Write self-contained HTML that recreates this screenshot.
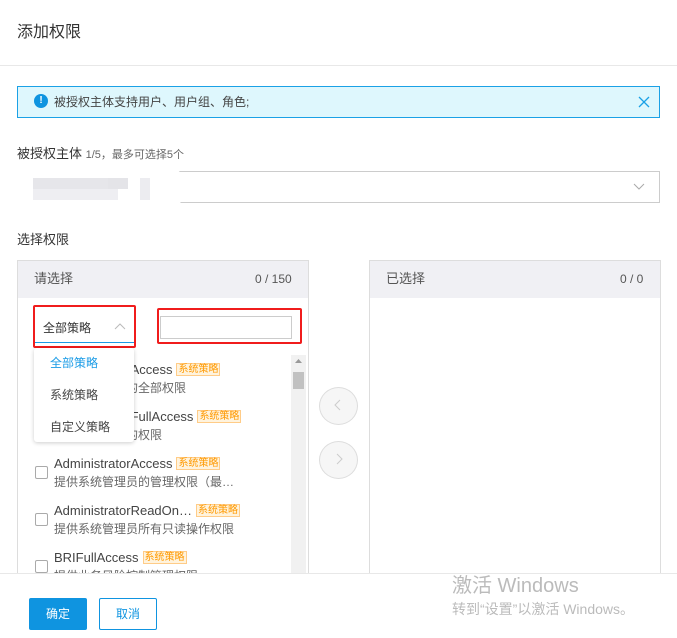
<!DOCTYPE html>
<html><head><meta charset="utf-8"><style>
*{margin:0;padding:0;box-sizing:border-box}
body{width:677px;height:638px;position:relative;background:#fff;font-family:"Liberation Sans","Noto Sans CJK SC",sans-serif;color:#333;overflow:hidden;font-size:12px}
.a{position:absolute;white-space:nowrap;line-height:16px}
.tag{font-size:10px;color:#f90;background:#fff3dd;border:1px solid #fc8;padding:0 1px;line-height:12px;margin-left:4px;vertical-align:2px}
.nm{font-size:13px;color:#444}
.ds{font-size:12px;color:#666}
.cb{position:absolute;width:13px;height:13px;border:1px solid #aaa;border-radius:2px;background:#fff}
</style></head><body>
<div class="a" style="left:17px;top:24px;font-size:16px;line-height:18px;color:#333">添加权限</div>
<div class="a" style="left:0;top:65px;width:677px;height:1px;background:#e8e8e8"></div>
<div class="a" style="left:17px;top:86px;width:643px;height:32px;background:#def7fd;border:1px solid #1ba1e6"></div>
<div class="a" style="left:34px;top:94px;width:14px;height:14px;border-radius:50%;background:#0f94e0;color:#fff;font-size:10px;font-weight:bold;text-align:center;line-height:14px">!</div>
<div class="a" style="left:54px;top:94px;font-size:12px;color:#444">被授权主体支持用户、用户组、角色;</div>
<svg class="a" style="left:638px;top:96px" width="12" height="12"><path d="M1 1L11 11M11 1L1 11" stroke="#1ba1e6" stroke-width="1.3"/></svg>
<div class="a" style="left:17px;top:146px;font-size:13px;color:#333">被授权主体 <span style="font-size:11px;color:#666">1/5，最多可选择5个</span></div>
<div class="a" style="left:17px;top:171px;width:643px;height:32px;border:1px solid #ccc"></div>
<div class="a" style="left:8px;top:163px;width:175px;height:50px;background:#fff;border-radius:20px"></div>
<div class="a" style="left:33px;top:178px;width:85px;height:11px;background:#e6e6ea"></div>
<div class="a" style="left:33px;top:189px;width:85px;height:11px;background:#eeeef2"></div>
<div class="a" style="left:108px;top:178px;width:20px;height:11px;background:#e4e4e8"></div>
<div class="a" style="left:140px;top:178px;width:10px;height:22px;background:#ececf0"></div>
<svg class="a" style="left:633px;top:183px" width="12" height="8"><path d="M1 1L6 6L11 1" stroke="#aaa" fill="none"/></svg>
<div class="a" style="left:17px;top:232px;font-size:13px;color:#333">选择权限</div>

<div class="a" style="left:17px;top:260px;width:292px;height:330px;border:1px solid #ddd"></div>
<div class="a" style="left:18px;top:261px;width:290px;height:37px;background:#f0f0f4"></div>
<div class="a" style="left:34px;top:271px;font-size:13px;color:#555">请选择</div>
<div class="a" style="left:255px;top:271px;font-size:12px;color:#555">0 / 150</div>
<div class="a" style="left:369px;top:260px;width:292px;height:330px;border:1px solid #ddd"></div>
<div class="a" style="left:370px;top:261px;width:290px;height:37px;background:#f0f0f4"></div>
<div class="a" style="left:386px;top:271px;font-size:13px;color:#555">已选择</div>
<div class="a" style="left:620px;top:271px;font-size:12px;color:#555">0 / 0</div>

<div class="a" style="left:319px;top:387px;width:39px;height:38px;border-radius:50%;border:1px solid #ddd;background:#f6f6f6"></div>
<svg class="a" style="left:334px;top:399px" width="8" height="12"><path d="M6 1L1 6L6 11" stroke="#ccc" fill="none"/></svg>
<div class="a" style="left:319px;top:441px;width:39px;height:38px;border-radius:50%;border:1px solid #ddd;background:#f6f6f6"></div>
<svg class="a" style="left:336px;top:453px" width="8" height="12"><path d="M1 1L6 6L1 11" stroke="#ccc" fill="none"/></svg>

<div class="a" style="left:291px;top:355px;width:15px;height:218px;background:#f1f1f1"></div>
<div class="a" style="left:293px;top:372px;width:11px;height:17px;background:#c1c1c1"></div>
<svg class="a" style="left:295px;top:359px" width="7" height="5"><path d="M0 4L3.5 0L7 4Z" fill="#999"/></svg>

<div class="a" style="left:54px;top:362px"><span class="nm">AdministratorAccess</span><span class="tag">系统策略</span></div>
<div class="a ds" style="left:54px;top:380px">提供系统管理的全部权限</div>
<div class="a" style="left:54px;top:409px"><span class="nm">AdministratorFullAccess</span><span class="tag">系统策略</span></div>
<div class="a ds" style="left:54px;top:427px">提供访问记录的权限</div>
<div class="cb" style="left:35px;top:466px"></div>
<div class="a" style="left:54px;top:456px"><span class="nm">AdministratorAccess</span><span class="tag">系统策略</span></div>
<div class="a ds" style="left:54px;top:474px">提供系统管理员的管理权限（最…</div>
<div class="cb" style="left:35px;top:513px"></div>
<div class="a" style="left:54px;top:503px"><span class="nm">AdministratorReadOn…</span><span class="tag">系统策略</span></div>
<div class="a ds" style="left:54px;top:521px">提供系统管理员所有只读操作权限</div>
<div class="cb" style="left:35px;top:560px"></div>
<div class="a" style="left:54px;top:550px"><span class="nm">BRIFullAccess</span><span class="tag">系统策略</span></div>
<div class="a ds" style="left:54px;top:568px">提供业务风险控制管理权限</div>

<div class="a" style="left:34px;top:313px;width:100px;height:30px;border-bottom:1px solid #1a9be6;background:#fff"></div>
<div class="a" style="left:43px;top:320px;font-size:12px;color:#333">全部策略</div>
<svg class="a" style="left:114px;top:323px" width="12" height="7"><path d="M1 6L6 1L11 6" stroke="#bbb" fill="none"/></svg>
<div class="a" style="left:33px;top:305px;width:103px;height:43px;border:2px solid #f01c1c;border-radius:2px"></div>
<div class="a" style="left:160px;top:316px;width:132px;height:23px;border:1px solid #ccc"></div>
<div class="a" style="left:157px;top:308px;width:145px;height:36px;border:2px solid #f01c1c;border-radius:2px"></div>

<div class="a" style="left:34px;top:348px;width:100px;height:94px;background:#fff;border-radius:3px;box-shadow:0 1px 4px rgba(0,0,0,.2)"></div>
<div class="a" style="left:50px;top:355px;font-size:12px;color:#1a9be6">全部策略</div>
<div class="a" style="left:50px;top:387px;font-size:12px;color:#444">系统策略</div>
<div class="a" style="left:50px;top:419px;font-size:12px;color:#444">自定义策略</div>

<div class="a" style="left:0;top:573px;width:677px;height:65px;background:#fff;border-top:1px solid #e8e8e8"></div>
<div class="a" style="left:29px;top:598px;width:58px;height:32px;background:#0f94e0;border-radius:2px;color:#fff;font-size:12px;text-align:center;line-height:32px">确定</div>
<div class="a" style="left:99px;top:598px;width:58px;height:32px;border:1px solid #0f94e0;border-radius:2px;color:#0f94e0;font-size:12px;text-align:center;line-height:30px">取消</div>
<div class="a" style="left:452px;top:574px;font-size:20px;line-height:24px;color:#bbb">激活 Windows</div>
<div class="a" style="left:452px;top:601px;font-size:14px;color:#bbb">转到“设置”以激活 Windows。</div>
</body></html>
